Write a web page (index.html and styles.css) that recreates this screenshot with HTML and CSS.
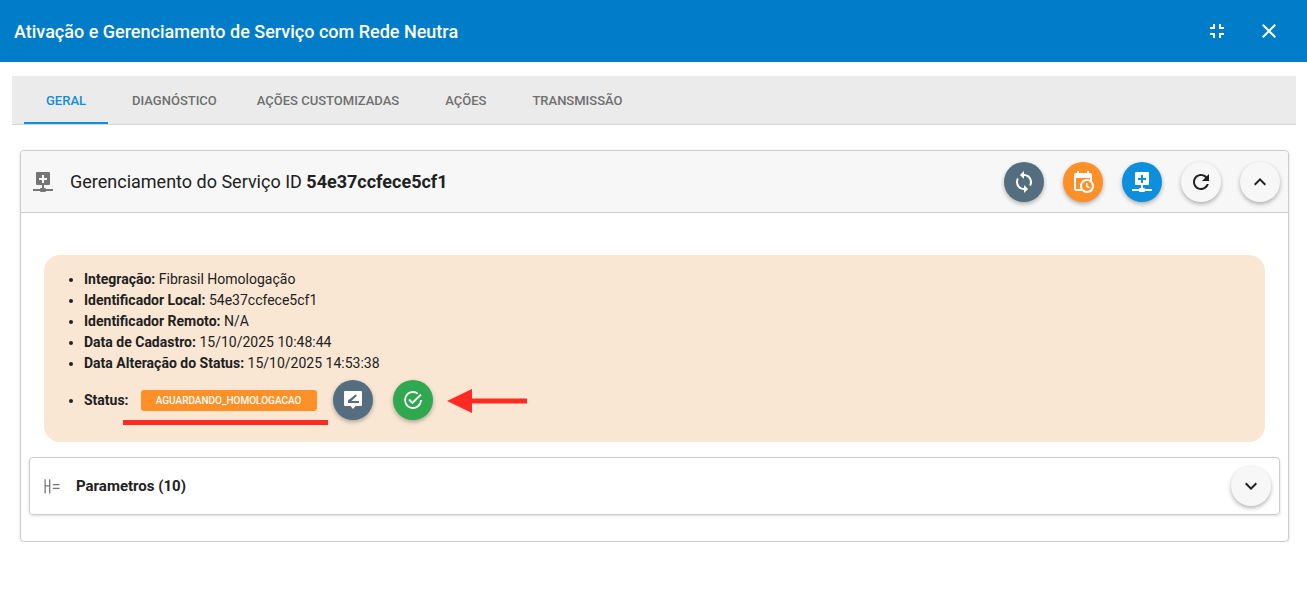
FILE: index.html
```html
<!DOCTYPE html>
<html lang="en">
<head>
    <meta charset="UTF-8">
    <title>Ativação e Gerenciamento de Serviço com Rede Neutra</title>
    <link rel="stylesheet" href="styles.css">
</head>
<body>
    <div class="top-bar">
        <h1>Ativação e Gerenciamento de Serviço com Rede Neutra</h1>
        <div class="top-actions">
            <svg class="icon" viewBox="0 0 24 24"><path d="M5 16h3v3h2v-5H5v2zm3-8H5v2h5V5H8v3zm6 11h2v-3h3v-2h-5v5zm2-11V5h-2v5h5V8h-3z"/></svg>
            <svg class="icon" viewBox="0 0 24 24"><path d="M19 6.41L17.59 5 12 10.59 6.41 5 5 6.41 10.59 12 5 17.59 6.41 19 12 13.41 17.59 19 19 17.59 13.41 12z"/></svg>
        </div>
    </div>

    <div class="content">
        <div class="tabs">
            <div class="tab active">GERAL</div>
            <div class="tab">DIAGNÓSTICO</div>
            <div class="tab tab-tight">AÇÕES CUSTOMIZADAS</div>
            <div class="tab">AÇÕES</div>
            <div class="tab">TRANSMISSÃO</div>
        </div>

        <div class="card">
            <div class="card-header">
                <svg class="icon header-icon" viewBox="0 0 24 24"><path fill-rule="evenodd" d="M6 2h12a1 1 0 0 1 1 1v11a1 1 0 0 1-1 1h-5v3h1a1 1 0 0 1 1 1h7v2h-7a1 1 0 0 1-1 1h-4a1 1 0 0 1-1-1H2v-2h7a1 1 0 0 1 1-1h1v-3H6a1 1 0 0 1-1-1V3a1 1 0 0 1 1-1zm5 3v3H8v2h3v3h2v-3h3V8h-3V5z"/></svg>
                <div class="card-title">Gerenciamento do Serviço ID <b>54e37ccfece5cf1</b></div>
                <div class="card-actions">
                    <div class="round-btn slate">
                        <svg class="icon" viewBox="0 0 24 24"><path d="M12 4V1L8 5l4 4V6c3.31 0 6 2.69 6 6 0 1.01-.25 1.97-.7 2.8l1.46 1.46C19.54 15.03 20 13.57 20 12c0-4.42-3.58-8-8-8zm0 14c-3.31 0-6-2.69-6-6 0-1.01.25-1.97.7-2.8L5.24 7.74C4.46 8.97 4 10.43 4 12c0 4.42 3.58 8 8 8v3l4-4-4-4v3z"/></svg>
                    </div>
                    <div class="round-btn orange">
                        <svg class="icon" viewBox="0 0 24 24"><path d="M15 13h1.5v2.82l2.44 1.41-.75 1.3L15 16.69V13zm4-5H5v11h4.67A7 7 0 0 1 16 9c1.07 0 2.09.24 3 .67V8zM5 21c-1.11 0-2-.9-2-2V5c0-1.11.89-2 2-2h1V1h2v2h8V1h2v2h1a2 2 0 0 1 2 2v6.1A7 7 0 0 1 16 23c-1.91 0-3.64-.76-4.9-2H5zm11-10a5 5 0 1 0 0 10 5 5 0 0 0 0-10z"/></svg>
                    </div>
                    <div class="round-btn blue">
                        <svg class="icon" viewBox="0 0 24 24"><path fill-rule="evenodd" d="M6 2h12a1 1 0 0 1 1 1v11a1 1 0 0 1-1 1h-5v3h1a1 1 0 0 1 1 1h7v2h-7a1 1 0 0 1-1 1h-4a1 1 0 0 1-1-1H2v-2h7a1 1 0 0 1 1-1h1v-3H6a1 1 0 0 1-1-1V3a1 1 0 0 1 1-1zm5 3v3H8v2h3v3h2v-3h3V8h-3V5z"/></svg>
                    </div>
                    <div class="round-btn light">
                        <svg class="icon" viewBox="0 0 24 24"><path d="M17.65 6.35C16.2 4.9 14.21 4 12 4c-4.42 0-7.99 3.58-7.99 8s3.57 8 7.99 8c3.73 0 6.84-2.55 7.73-6h-2.08c-.82 2.33-3.04 4-5.65 4-3.31 0-6-2.69-6-6s2.69-6 6-6c1.66 0 3.14.69 4.22 1.78L13 11h7V4l-2.35 2.35z"/></svg>
                    </div>
                    <div class="round-btn light">
                        <svg class="icon" viewBox="0 0 24 24"><path d="M12 8l-6 6 1.41 1.41L12 10.83l4.59 4.58L18 14z"/></svg>
                    </div>
                </div>
            </div>

            <div class="card-body">
                <div class="info-panel">
                    <ul>
                        <li><b>Integração:</b> Fibrasil Homologação</li>
                        <li><b>Identificador Local:</b> 54e37ccfece5cf1</li>
                        <li><b>Identificador Remoto:</b> N/A</li>
                        <li><b>Data de Cadastro:</b> 15/10/2025 10:48:44</li>
                        <li><b>Data Alteração do Status:</b> 15/10/2025 14:53:38</li>
                        <li class="status-row">
                            <div class="status-line">
                                <b>Status:</b>
                                <span class="tag">AGUARDANDO_HOMOLOGACAO</span>
                                <div class="round-btn slate">
                                    <svg class="icon" viewBox="0 0 24 24"><path fill-rule="evenodd" d="M4 3h16a1 1 0 0 1 1 1v13a1 1 0 0 1-1 1h-5.5L12 21l-2.5-3H4a1 1 0 0 1-1-1V4a1 1 0 0 1 1-1zm10.6 3.4L7 12.6V15h11v-2h-7.6l5.6-5.2z"/></svg>
                                </div>
                                <div class="round-btn green">
                                    <svg class="icon" viewBox="0 0 24 24"><path d="M20 12a8 8 0 1 1-3.2-6.4" fill="none" stroke="currentColor" stroke-width="1.8"/><path d="M8 11.5l3.4 3.4L20 6.5" fill="none" stroke="currentColor" stroke-width="1.8"/></svg>
                                </div>
                            </div>
                        </li>
                    </ul>
                    <div class="underline-mark"></div>
                    <svg class="arrow-mark" viewBox="0 0 80 24"><path d="M0 12L25 0v9.5h55v5H25V24z"/></svg>
                </div>

                <div class="sub-card">
                    <svg class="icon sub-icon" viewBox="0 0 24 24"><path d="M3 4h1.5v7h4V4H10v17H8.5v-8.500h-4V21H3zM13 9.500h8V11h-8zM13 14h8v1.500h-8z"/></svg>
                    <div class="sub-title">Parametros (10)</div>
                    <div class="round-btn light">
                        <svg class="icon" viewBox="0 0 24 24"><path d="M16.59 8.59L12 13.17 7.41 8.59 6 10l6 6 6-6z"/></svg>
                    </div>
                </div>
            </div>
        </div>
    </div>
</body>
</html>
```
FILE: styles.css
```css
* {
    margin: 0;
    padding: 0;
    box-sizing: border-box;
}

body {
    font-family: Roboto, "Liberation Sans", sans-serif;
    font-size: 14px;
    color: #212121;
    background: #fff;
}

.icon {
    display: block;
    width: 24px;
    height: 24px;
    fill: currentColor;
}

.top-bar {
    height: 62px;
    background: #007cc8;
    color: #fff;
    display: flex;
    align-items: center;
    justify-content: space-between;
    padding: 0 26px 0 14px;
}

.top-bar h1 {
    font-size: 18px;
    font-weight: 500;
}

.top-actions {
    display: flex;
    gap: 28px;
}

.content {
    padding: 14px 11px 0 12px;
}

.tabs {
    height: 49px;
    background: #ebebeb;
    border-bottom: 1px solid #d6d6d6;
    display: flex;
    padding-left: 12px;
}

.tab {
    height: 48px;
    padding: 2px 22px 0;
    margin-right: 2px;
    display: flex;
    align-items: center;
    font-size: 13px;
    font-weight: 500;
    color: #6f6f6f;
    border-bottom: 2px solid transparent;
}

.tab.active {
    color: #0f8fdc;
    border-bottom-color: #0f8fdc;
}

.tab-tight {
    margin-left: -6px;
}

.card {
    margin: 25px 7px 0 8px;
    height: 392px;
    border: 1px solid #ccc;
    border-radius: 4px;
    box-shadow: 0 1px 3px rgba(0, 0, 0, 0.15);
}

.card-header {
    height: 62px;
    background: #f7f7f7;
    border-bottom: 1px solid #ccc;
    border-radius: 4px 4px 0 0;
    display: flex;
    align-items: center;
    padding: 0 8px 0 10px;
}

.header-icon {
    color: #757575;
}

.card-title {
    font-size: 18px;
    margin-left: 15px;
}

.card-actions {
    display: flex;
    gap: 19px;
    margin-left: auto;
}

.round-btn {
    width: 40px;
    height: 40px;
    border-radius: 50%;
    display: flex;
    align-items: center;
    justify-content: center;
    flex-shrink: 0;
    box-shadow: 0 2px 4px rgba(0, 0, 0, 0.3);
}

.slate { background: #546e7f; color: #fff; }
.orange { background: #ff8f27; color: #fff; }
.blue { background: #0e8fdc; color: #fff; }
.green { background: #2fa84f; color: #fff; }
.light { background: #f7f7f7; color: #212121; }

.card-body {
    padding: 42px 8px 0;
}

.info-panel {
    position: relative;
    height: 187px;
    margin: 0 15px;
    padding: 14px 0 0 40px;
    background: #f9e7d4;
    border-radius: 16px;
}

.info-panel li {
    line-height: 21px;
}

.status-row {
    margin-top: 6px;
}

.status-line {
    display: flex;
    align-items: center;
    height: 40px;
}

.tag {
    margin-left: 12px;
    width: 176px;
    height: 21px;
    line-height: 21px;
    text-align: center;
    background: #ff8f27;
    color: #fff;
    font-size: 10px;
    font-weight: 500;
    border-radius: 3px;
}

.tag + .round-btn {
    margin-left: 16px;
}

.status-line .green {
    margin-left: 20px;
}

.underline-mark {
    position: absolute;
    left: 79px;
    top: 165px;
    width: 205px;
    height: 5px;
    background: #ff2a22;
}

.arrow-mark {
    position: absolute;
    left: 403px;
    top: 134px;
    width: 80px;
    height: 24px;
    fill: #ff2a22;
}

.sub-card {
    margin-top: 15px;
    height: 58px;
    border: 1px solid #ccc;
    border-radius: 4px;
    box-shadow: 0 1px 3px rgba(0, 0, 0, 0.15);
    display: flex;
    align-items: center;
    padding: 0 8px 0 12px;
}

.sub-icon {
    color: #757575;
    width: 20px;
    height: 20px;
}

.sub-title {
    margin-left: 14px;
    font-size: 15px;
    font-weight: 700;
}

.sub-card .round-btn {
    margin-left: auto;
}
```
